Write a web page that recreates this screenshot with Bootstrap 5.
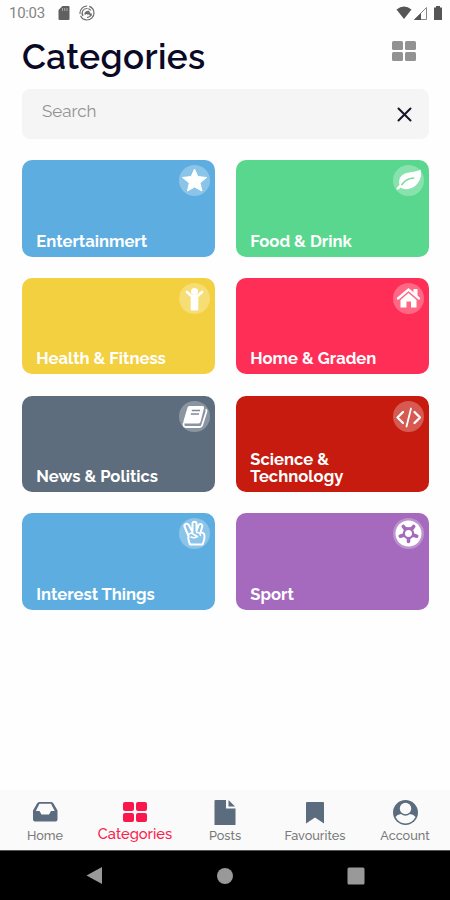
<!DOCTYPE html>
<html lang="en">
<head>
<meta charset="utf-8">
<meta name="viewport" content="width=device-width, initial-scale=1">
<title>Categories</title>
<link href="https://cdn.jsdelivr.net/npm/bootstrap@5.3.0/dist/css/bootstrap.min.css" rel="stylesheet">
<style>
body { font-family: Raleway, Lato, sans-serif; background: #fefefe; height: 900px; overflow: hidden; }
svg { display: block; flex: none; }
.status { height: 27px; padding: 0 7px 1px 9px; font: 15px Roboto, sans-serif; color: #858585; letter-spacing: -.3px; }
.page-head { height: 62px; padding: 9px 34px 0 22px; }
.page-title { font-size: 35px; font-weight: 600; line-height: 41px; color: #0b0a26; letter-spacing: .4px; }
.search { height: 50px; margin: 0 21px 21px 22px; border-radius: 8px; background: #f5f5f5; }
.search input { font-size: 17px; color: #8d8d8d; padding: 0 0 6px 20px; height: 50px; }
.search input::placeholder { color: #929292; opacity: 1; }
.tiles { display: grid; grid-template-columns: 193px 193px; grid-auto-rows: 96.5px; gap: 21.3px 21px; padding-left: 22px; }
.tile { border-radius: 10px; padding: 5px 5px 7px 14.3px; color: #fff; font-weight: 700; font-size: 16.6px; line-height: 17px; text-decoration: none; }
.bubble { width: 31px; height: 31px; background: rgba(255,255,255,.28); }
.t-blue { background: #5dade1; } .t-green { background: #59d78e; } .t-yellow { background: #f3d03f; }
.t-pink { background: #ff2e57; } .t-slate { background: #5d6d7d; } .t-red { background: #c61b0e; } .t-purple { background: #a569bd; }
.tabs { height: 60px; background: #fafafa; color: #7a7a7a; font-size: 12.7px; font-weight: 500; }
.tab { width: 90px; padding-top: 8px; color: inherit; text-decoration: none; line-height: 16px; }
.tab svg { margin-bottom: 2px; color: #5b6c7f; }
.tab.active { color: #f9214e; font-size: 14.7px; }
.tab.active svg { color: #fa174b; margin-bottom: 1px; }
.sysbar { height: 50px; background: #000; border-top: 1px solid #555; padding: 0 85px; }
</style>
<script src="https://cdn.jsdelivr.net/npm/bootstrap@5.3.0/dist/js/bootstrap.bundle.min.js"></script>
</head>
<body class="d-flex flex-column">
<div class="status d-flex align-items-center">
  <span>10:03</span>
  <svg style="margin-left:13px" width="12" height="14" viewBox="0 0 12 14"><path d="M4.5 0H10.500Q11.500 0 11.500 1V13Q11.500 14 10.500 14H1.500Q.5 14 .5 13V4Z" fill="#606060"/><path d="M4.500 2v3M6.700 2v3M9 2v3" stroke="#aaa"/></svg>
  <svg style="margin-left:9px" width="16" height="16" viewBox="0 0 16 16" fill="none" stroke="#6c6c6c"><circle cx="8" cy="8" r="7" stroke-width="1.200" stroke-dasharray="19 2 12 2"/><path d="M4 11A4.700 4.700 0 0 1 8 3.500Q10.500 3.500 12 5.500M12.500 8.500Q12 12 8 12.500" stroke-width="1.200"/><path d="M6 9.500Q6.500 6.500 9.500 6.500L12 11M7 7L9.500 9.500" stroke-width="1.700"/></svg>
  <svg class="ms-auto" width="16" height="14" viewBox="0 0 16 14"><path d="M.5 3.500Q8-2.500 15.500 3.500L8 13Z" fill="#555"/></svg>
  <svg style="margin-left:1px" width="15" height="15" viewBox="0 0 15 15"><path d="M1.500 13.500L13.500 1.500V13.500Z" fill="#fff" stroke="#888"/><path d="M1 14L8 7V14Z" fill="#555"/></svg>
  <svg style="margin-left:5px" width="10" height="14" viewBox="0 0 10 14"><path d="M3 0H7V1.500H9V14H1V1.500H3Z" fill="#555"/></svg>
</div>
<header class="page-head d-flex justify-content-between">
  <h1 class="page-title m-0">Categories</h1>
  <svg class="mt-1" width="24" height="22" viewBox="0 0 24 22" fill="#929292"><rect x="0" y="1" width="11" height="9" rx="1.500"/><rect x="13" y="1" width="11" height="9" rx="1.500"/><rect x="0" y="12" width="11" height="9" rx="1.500"/><rect x="13" y="12" width="11" height="9" rx="1.500"/></svg>
</header>
<div class="search d-flex align-items-center">
  <input class="form-control border-0 bg-transparent shadow-none" type="text" placeholder="Search" aria-label="Search">
  <svg class="me-3" width="17" height="17" viewBox="0 0 17 17" stroke="#17152c" stroke-width="2" stroke-linecap="round"><path d="M2.500 2.500L14.500 14.500M14.500 2.500L2.500 14.500"/></svg>
</div>
<main class="tiles">
  <a class="tile t-blue d-flex flex-column justify-content-between"><span class="bubble rounded-circle align-self-end"><svg width="31" height="31" viewBox="0 0 31 31"><path d="M15.500 4L18.800 11.500L27.500 12.500L21 18L23 26L15.500 22L8.500 26L10.300 18L3.500 12.500L12.200 11.500Z" fill="#fff" stroke="#fff" stroke-linejoin="round"/></svg></span><span>Entertainmert</span></a>
  <a class="tile t-green d-flex flex-column justify-content-between"><span class="bubble rounded-circle align-self-end"><svg width="31" height="31" viewBox="0 0 31 31"><path d="M27.500 4.500C23 8 12 5.500 7.500 12C5.500 15 6 18 6.500 20C5 21.500 3.500 22.500 3.500 24C4 25.500 6 24.500 7.500 22.500C12 25.500 20 24.500 24.500 18.500C28 14 29 9 27.500 4.500Z" fill="#fff"/><path d="M9 19.500Q13 13.500 20.500 13" fill="none" stroke="#76d9a0" stroke-width="1.700" stroke-linecap="round"/></svg></span><span>Food &amp; Drink</span></a>
  <a class="tile t-yellow d-flex flex-column justify-content-between"><span class="bubble rounded-circle align-self-end"><svg width="31" height="31" viewBox="0 0 31 31" fill="#fff"><circle cx="15.500" cy="8.500" r="3.500"/><path d="M8 9L13 13.500H18L23 9" fill="none" stroke="#fff" stroke-width="2.800" stroke-linecap="round" stroke-linejoin="round"/><path d="M11.700 12.500H19.300V26.500Q19.300 27.500 18 27.500H13Q11.700 27.500 11.700 26.500Z"/></svg></span><span>Health &amp; Fitness</span></a>
  <a class="tile t-pink d-flex flex-column justify-content-between"><span class="bubble rounded-circle align-self-end"><svg width="31" height="31" viewBox="0 0 31 31"><path d="M5 15.500L15.500 6.500L26 15.500" fill="none" stroke="#fff" stroke-width="2.400" stroke-linecap="round"/><path d="M20.500 6H24.500V14L20.500 10.500Z" fill="#fff"/><path d="M7.500 17L15.500 10L23.500 17V24.500H18V18.500H13.500V24.500H7.500Z" fill="#fff"/></svg></span><span>Home &amp; Graden</span></a>
  <a class="tile t-slate d-flex flex-column justify-content-between"><span class="bubble rounded-circle align-self-end"><svg width="31" height="31" viewBox="0 0 31 31"><path d="M10.500 5H23.500Q25.500 5 25 7L21.500 21Q21 22.500 19 22.500H5Q3.800 22 4.500 20L8.500 6.500Q9 5 10.500 5Z" fill="#fff"/><path d="M4.600 22Q4 26 7 26H20.500Q22.500 26 23 24.500L27.300 11Q28 9 26.500 8.500" fill="none" stroke="#fff" stroke-width="1.800"/><path d="M12.800 9.500H21M11.800 13H20" stroke="#7f8a96" stroke-width="1.400"/></svg></span><span>News &amp; Politics</span></a>
  <a class="tile t-red d-flex flex-column justify-content-between"><span class="bubble rounded-circle align-self-end"><svg width="31" height="31" viewBox="0 0 31 31" fill="none" stroke="#fff" stroke-width="2.300" stroke-linecap="round" stroke-linejoin="round"><path d="M10 11L4.500 16.500L10 22M21.500 11L27 16.500L21.500 22"/><path d="M18 7.500L13.500 25.500" stroke-width="1.800"/></svg></span><span>Science &amp;<br>Technology</span></a>
  <a class="tile t-blue d-flex flex-column justify-content-between"><span class="bubble rounded-circle align-self-end"><svg width="31" height="31" viewBox="0 0 31 31" fill="none" stroke="#fff" stroke-width="2" stroke-linejoin="round" stroke-linecap="round"><path d="M9.500 18L5.500 8.500C4.800 6 8.500 4.500 9.800 7L13.500 14V5.500C13.500 3 17.500 3 17.500 5.500V13L19.500 7.500C20.500 5 24 6 23.300 8.500L21.500 14.500C25.500 14.500 25.500 16.500 25.500 19C25.500 22 24.500 24 23.500 26.500H11C10.500 24 8.500 22.500 9.500 18Z"/><path d="M9.500 16.500Q11.500 14 14 16L18.500 18.500Q15 20.500 12 19M17.500 14.500Q21 14 21.500 17.500" stroke-width="1.500"/></svg></span><span>Interest Things</span></a>
  <a class="tile t-purple d-flex flex-column justify-content-between"><span class="bubble rounded-circle align-self-end"><svg width="31" height="31" viewBox="0 0 31 31"><circle cx="15.500" cy="15.500" r="13" fill="#fff"/><path d="M15.500 15.500V23.500M15.500 15.500L7.300 18.200M15.500 15.500L23.700 18.200M15.500 15.500L10.300 8.500M15.500 15.500L20.700 8.500" stroke="#a569bd" stroke-width="3.600" stroke-linecap="round"/><circle cx="15.500" cy="15.500" r="4.600" fill="#fff" stroke="#a569bd" stroke-width="2.200"/><path d="M10.500 8.500Q15.500 11.500 20.500 8.500" fill="none" stroke="#a569bd" stroke-width="1.400"/></svg></span><span>Sport</span></a>
</main>
<nav class="tabs d-flex mt-auto text-center">
  <a class="tab d-flex flex-column align-items-center"><svg width="28" height="28" viewBox="0 0 28 28" fill="currentColor"><path fill-rule="evenodd" d="M8 4H20.500Q21.500 4 22.500 5.500L26.500 12.500V21.500Q26.500 23.500 24.500 23.500H4Q2 23.500 2 21.500V12.500L6 5.500Q7 4 8 4ZM8.500 5.800L4.800 13H8.500L10.500 16.500H18L20 13H23.700L20 5.800Z"/></svg><span>Home</span></a>
  <a class="tab active d-flex flex-column align-items-center"><svg width="24" height="27" viewBox="0 0 24 27" fill="currentColor"><rect x="0" y="4" width="11" height="9" rx="2"/><rect x="13" y="4" width="11" height="9" rx="2"/><rect x="0" y="15" width="11" height="9" rx="2"/><rect x="13" y="15" width="11" height="9" rx="2"/></svg><span>Categories</span></a>
  <a class="tab d-flex flex-column align-items-center"><svg width="28" height="28" viewBox="0 0 28 28" fill="currentColor"><path d="M4.500 2H15V10.500H24.500V27H3.500V3Q3.500 2 4.500 2Z"/><path d="M17.500 2L24 8.500H17.500Z"/></svg><span>Posts</span></a>
  <a class="tab d-flex flex-column align-items-center"><svg width="28" height="28" viewBox="0 0 28 28" fill="currentColor"><path d="M5 5Q5 4 6 4H22Q23 4 23 5V25.500L14 19.500L5 25.500Z"/></svg><span>Favourites</span></a>
  <a class="tab d-flex flex-column align-items-center"><svg width="28" height="28" viewBox="0 0 28 28"><circle cx="14.500" cy="14.500" r="12.500" fill="currentColor"/><g fill="#fafafa"><circle cx="14.500" cy="10.500" r="5.700"/><path d="M4.500 19Q6 16.500 10 16Q14.500 19.500 19 16Q23 16.500 24.500 19Q21 25.500 14.500 25.500Q8 25.500 4.500 19Z"/></g></svg><span>Account</span></a>
</nav>
<div class="sysbar d-flex align-items-center justify-content-between">
  <svg width="18" height="19" viewBox="0 0 18 19"><path d="M1.500 9.500L17 1V18Z" fill="#999"/></svg>
  <svg width="18" height="18" viewBox="0 0 18 18"><circle cx="9" cy="9" r="8" fill="#999"/></svg>
  <svg width="18" height="18" viewBox="0 0 18 18"><rect x=".5" y=".5" width="17" height="17" rx="1.500" fill="#999"/></svg>
</div>
</body>
</html>
